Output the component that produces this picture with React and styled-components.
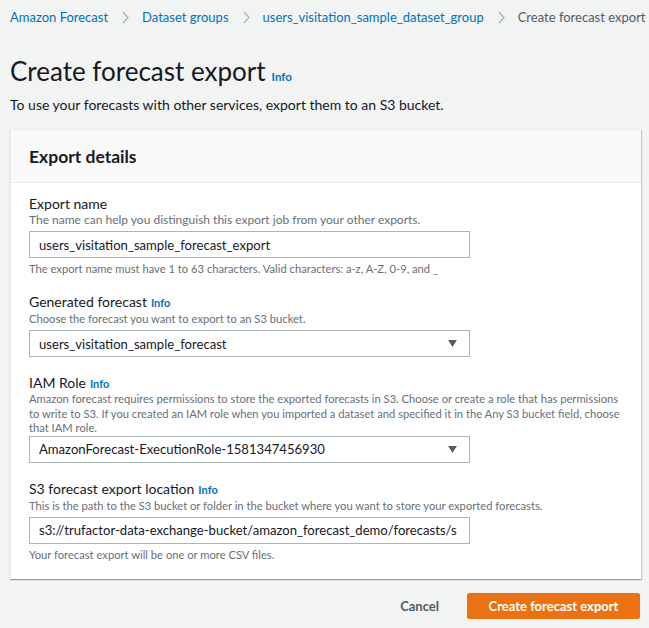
import React from 'react';
import styled, { createGlobalStyle } from 'styled-components';

const GlobalStyle = createGlobalStyle`
  html, body {
    margin: 0;
    padding: 0;
    background: #f2f3f3;
    font-family: Lato, "Liberation Sans", sans-serif;
    color: #16191f;
  }
`;

const Page = styled.div`
  width: 649px;
  height: 628px;
  overflow: hidden;
  padding: 0 8px 0 10px;
  box-sizing: border-box;
`;

const Breadcrumbs = styled.nav`
  display: flex;
  align-items: center;
  height: 34px;
  font-size: 13px;
  white-space: nowrap;
`;

const Crumb = styled.a`
  color: ${(p) => (p.current ? '#545b64' : '#0073bb')};
  text-decoration: none;
`;

const Chevron = styled.span`
  display: inline-flex;
  margin: 0 13px 0 14px;
  color: #aab7b8;
`;

const TitleRow = styled.div`
  display: flex;
  align-items: baseline;
  margin-top: 18px;
  height: 38px;
`;

const Title = styled.h1`
  margin: 0;
  font-size: 26px;
  font-weight: 400;
  line-height: 38px;
`;

const Info = styled.a`
  color: #0073bb;
  font-size: ${(p) => p.size || 11}px;
  font-weight: 700;
  text-decoration: none;
  margin-left: ${(p) => p.gap || 8}px;
`;

const Lead = styled.p`
  margin: 5px 0 0;
  font-size: 14px;
  line-height: 20px;
`;

const Container = styled.section`
  margin-top: 14px;
  background: #fff;
  border-top: 1px solid #eaeded;
  border-left: 1px solid #eaeded;
  box-shadow: 0 1px 1px 0 rgba(0, 28, 36, 0.3), 1px 1px 1px 0 rgba(0, 28, 36, 0.15);
`;

const Header = styled.div`
  background: #fafafa;
  border-bottom: 1px solid #eaeded;
  height: 52px;
  display: flex;
  align-items: center;
  padding: 0 18px;
`;

const HeaderTitle = styled.h2`
  margin: 0;
  font-size: 17.5px;
  font-weight: 700;
`;

const Body = styled.div`
  padding: 13px 18px 17px;
  display: flex;
  flex-direction: column;
  gap: 18px;
`;

const Field = styled.div`
  display: flex;
  flex-direction: column;
`;

const Label = styled.label`
  font-size: 14px;
  line-height: 16px;
  display: flex;
  align-items: baseline;
`;

const Desc = styled.div`
  font-size: ${(p) => p.size || 11.2}px;
  line-height: ${(p) => (p.tight ? 14.5 : 15)}px;
  color: #687078;
  margin-bottom: ${(p) => (p.tight ? 0 : 4)}px;
  white-space: nowrap;
`;

const Hint = styled.div`
  font-size: 11.2px;
  line-height: 14px;
  color: #687078;
  margin-top: 4px;
`;

const Input = styled.div`
  width: 441px;
  height: 27px;
  box-sizing: border-box;
  border: 1px solid #aab7b8;
  background: #fff;
  display: flex;
  align-items: center;
  justify-content: space-between;
  padding: 0 12px 0 9px;
  font-size: 13.1px;
  white-space: nowrap;
  overflow: hidden;
`;

const Caret = styled.svg`
  flex: none;
  width: 9px;
  height: 7px;
  fill: #545b64;
`;

const Actions = styled.div`
  display: flex;
  justify-content: flex-end;
  align-items: center;
  gap: 28px;
  margin-top: 14px;
  padding-right: 1px;
`;

const LinkButton = styled.button`
  border: none;
  background: none;
  font-family: inherit;
  font-size: 13px;
  font-weight: 700;
  color: #545b64;
  padding: 0;
`;

const PrimaryButton = styled.button`
  border: 1px solid #ec7211;
  background: #ec7211;
  color: #fff;
  font-family: inherit;
  font-size: 13px;
  font-weight: 700;
  height: 26px;
  width: 173px;
  border-radius: 2px;
`;

const Sep = () => (
  <Chevron>
    <svg width="7" height="13" viewBox="0 0 7 13">
      <path d="M1 1l5 5.5-5 5.5" fill="none" stroke="currentColor" strokeWidth="1.3" />
    </svg>
  </Chevron>
);

const Arrow = () => (
  <Caret viewBox="0 0 10 8">
    <path d="M0 0h10L5 8z" />
  </Caret>
);

export default function App() {
  return (
    <>
      <GlobalStyle />
      <Page>
        <Breadcrumbs>
          <Crumb href="#">Amazon Forecast</Crumb>
          <Sep />
          <Crumb href="#">Dataset groups</Crumb>
          <Sep />
          <Crumb href="#">users_visitation_sample_dataset_group</Crumb>
          <Sep />
          <Crumb current>Create forecast export</Crumb>
        </Breadcrumbs>

        <TitleRow>
          <Title>Create forecast export</Title>
          <Info href="#" gap={6} size={11.5}>Info</Info>
        </TitleRow>
        <Lead>To use your forecasts with other services, export them to an S3 bucket.</Lead>

        <Container>
          <Header>
            <HeaderTitle>Export details</HeaderTitle>
          </Header>
          <Body>
            <Field>
              <Label>Export name</Label>
              <Desc size={12}>The name can help you distinguish this export job from your other exports.</Desc>
              <Input>users_visitation_sample_forecast_export</Input>
              <Hint>The export name must have 1 to 63 characters. Valid characters: a-z, A-Z, 0-9, and _</Hint>
            </Field>

            <Field>
              <Label>Generated forecast<Info href="#" gap={4}>Info</Info></Label>
              <Desc>Choose the forecast you want to export to an S3 bucket.</Desc>
              <Input>users_visitation_sample_forecast<Arrow /></Input>
            </Field>

            <Field>
              <Label>IAM Role<Info href="#" gap={4}>Info</Info></Label>
              <Desc tight>
                Amazon forecast requires permissions to store the exported forecasts in S3. Choose or create a role that has permissions
                <br />
                to write to S3. If you created an IAM role when you imported a dataset and specified it in the Any S3 bucket field, choose
                <br />
                that IAM role.
              </Desc>
              <Input>AmazonForecast-ExecutionRole-1581347456930<Arrow /></Input>
            </Field>

            <Field>
              <Label>S3 forecast export location<Info href="#" gap={4}>Info</Info></Label>
              <Desc>This is the path to the S3 bucket or folder in the bucket where you want to store your exported forecasts.</Desc>
              <Input>s3://trufactor-data-exchange-bucket/amazon_forecast_demo/forecasts/s</Input>
              <Hint>Your forecast export will be one or more CSV files.</Hint>
            </Field>
          </Body>
        </Container>

        <Actions>
          <LinkButton>Cancel</LinkButton>
          <PrimaryButton>Create forecast export</PrimaryButton>
        </Actions>
      </Page>
    </>
  );
}
